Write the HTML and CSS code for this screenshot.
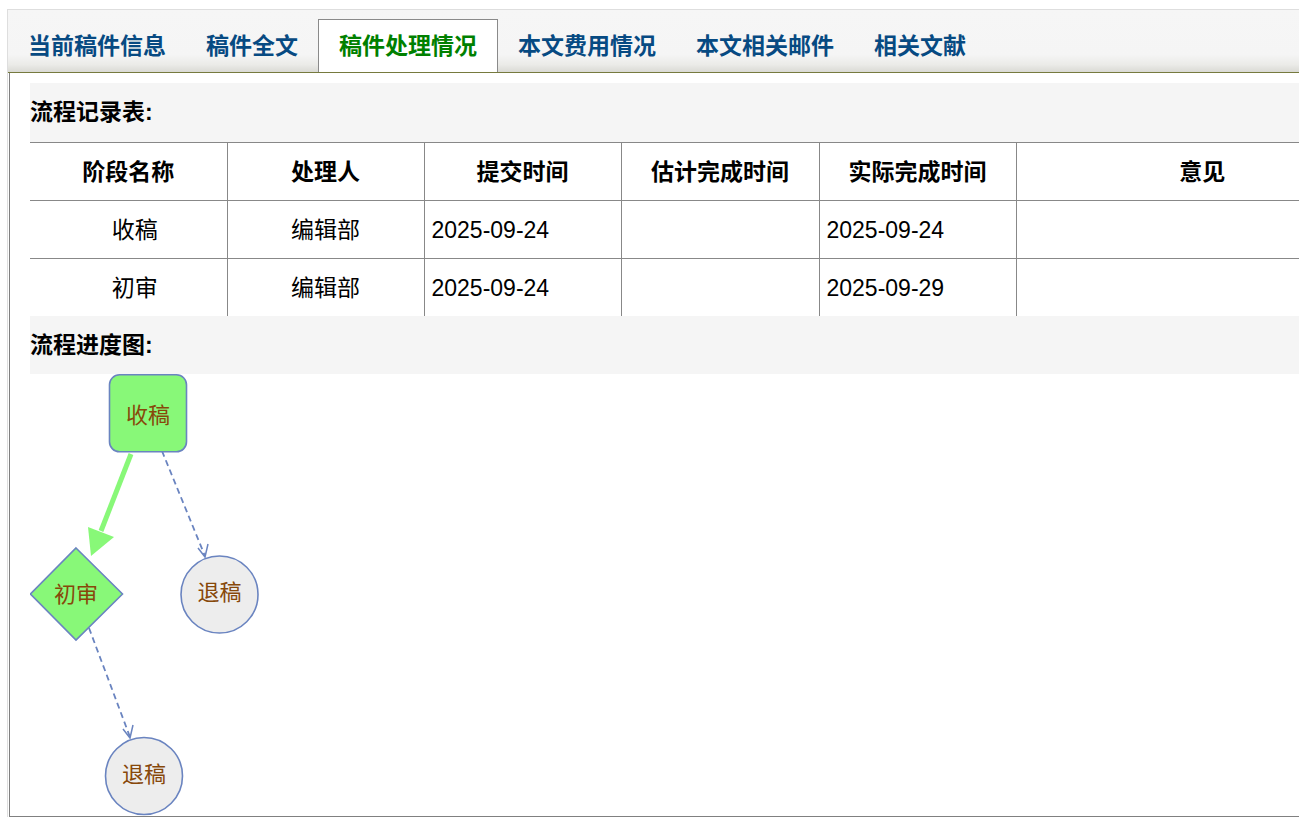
FILE: index.html
```html
<!DOCTYPE html>
<html lang="zh-CN">
<head>
<meta charset="utf-8">
<title>稿件处理情况</title>
<link rel="stylesheet" href="styles.css">
</head>
<body>
<div class="wrap">
  <div class="tabs">
    <div class="tab">当前稿件信息</div>
    <div class="tab">稿件全文</div>
    <div class="tab active">稿件处理情况</div>
    <div class="tab">本文费用情况</div>
    <div class="tab">本文相关邮件</div>
    <div class="tab">相关文献</div>
  </div>
  <div class="content">
    <div class="band first">流程记录表:</div>
    <table class="flow">
      <colgroup>
        <col class="c1"><col class="c2"><col class="c3"><col class="c4"><col class="c5"><col class="c6">
      </colgroup>
      <tr>
        <th>阶段名称</th><th>处理人</th><th>提交时间</th><th>估计完成时间</th><th>实际完成时间</th><th>意见</th>
      </tr>
      <tr>
        <td class="center stage">收稿</td><td class="center">编辑部</td><td>2025-09-24</td><td></td><td>2025-09-24</td><td></td>
      </tr>
      <tr>
        <td class="center stage">初审</td><td class="center">编辑部</td><td>2025-09-24</td><td></td><td>2025-09-29</td><td></td>
      </tr>
    </table>
    <div class="band">流程进度图:</div>
    <svg class="chart" width="320" height="442" viewBox="0 0 320 442" xmlns="http://www.w3.org/2000/svg">
      <line x1="101" y1="80" x2="71" y2="157" stroke="#88f878" stroke-width="5"/>
      <polygon points="58,153 84,163 61,182" fill="#88f878"/>
      <line x1="132" y1="77" x2="175" y2="182" stroke="#6a84c0" stroke-width="1.8" stroke-dasharray="6 4"/>
      <polyline points="168,174 175,183 178,170" fill="none" stroke="#6a84c0" stroke-width="1.5"/>
      <line x1="59" y1="254" x2="100" y2="363" stroke="#6a84c0" stroke-width="1.8" stroke-dasharray="6 4"/>
      <polyline points="93,355 100,364 103,351" fill="none" stroke="#6a84c0" stroke-width="1.5"/>
      <rect x="79.5" y="0.8" width="77" height="77" rx="10" ry="10" fill="#88f878" stroke="#6a84c0" stroke-width="1.6"/>
      <text x="118" y="39" class="lbl">收稿</text>
      <polygon points="46,174 92.5,220 46,266 0.5,220" fill="#88f878" stroke="#6a84c0" stroke-width="1.6"/>
      <text x="46" y="218" class="lbl">初审</text>
      <circle cx="189.5" cy="220.5" r="38.5" fill="#ededed" stroke="#6a84c0" stroke-width="1.6"/>
      <text x="189.5" y="216" class="lbl">退稿</text>
      <circle cx="114" cy="402" r="38.5" fill="#ededed" stroke="#6a84c0" stroke-width="1.6"/>
      <text x="114" y="398" class="lbl">退稿</text>
    </svg>
  </div>
</div>
</body>
</html>
```

FILE: styles.css
```css
html, body {
  margin: 0;
  padding: 0;
  overflow: hidden;
  background: #ffffff;
}

body {
  font-family: "Liberation Sans", "Noto Sans CJK SC", sans-serif;
  font-size: 23px;
  color: #000;
}

.wrap {
  width: 1420px;
  margin: 9px 0 0 7px;
  border-left: 1px solid #dedede;
  border-top: 1px solid #dedede;
}

.tabs {
  display: flex;
  align-items: flex-end;
  height: 62px;
  background: linear-gradient(to bottom, #f6f6f6 0%, #f5f5f5 72%, #ebebe8 88%, #dadad5 100%);
  border-bottom: 1px solid #767a3e;
}

.tab {
  padding: 0 20px;
  height: 52px;
  line-height: 52px;
  font-weight: bold;
  font-size: 23px;
  color: #074a82;
  white-space: nowrap;
}

.tab.active {
  background: #ffffff;
  color: #008000;
  border: 1px solid #8a8a8a;
  border-bottom: none;
}

.content {
  margin-left: 1px;
  border-left: 1px solid #808080;
  border-bottom: 1px solid #808080;
  padding: 10px 0 0 20px;
}

.band {
  background: #f5f5f5;
  height: 58px;
  line-height: 58px;
  font-weight: bold;
  font-size: 23px;
}

.band.first {
  height: 59px;
}

.flow {
  border-collapse: collapse;
  table-layout: fixed;
  width: 1358px;
}

.c1, .c2, .c3, .c5 { width: 197px; }
.c4 { width: 198px; }
.c6 { width: 372px; }

.flow th,
.flow td {
  height: 57px;
  padding: 0 0 0 7px;
  border-top: 1px solid #888888;
  border-left: 1px solid #888888;
  font-size: 23px;
  line-height: 26px;
  vertical-align: middle;
  text-align: left;
  white-space: nowrap;
}

.flow th {
  font-weight: bold;
  text-align: center;
  padding: 0;
}

.flow td.center {
  text-align: center;
  padding: 0;
}

.flow td.stage {
  padding-left: 13px;
}

.flow th:first-child,
.flow td:first-child {
  border-left: none;
}

.chart {
  display: block;
}

.lbl {
  font-family: "Noto Sans CJK SC", sans-serif;
  font-size: 22px;
  fill: #87480a;
  text-anchor: middle;
  dominant-baseline: central;
}
```
